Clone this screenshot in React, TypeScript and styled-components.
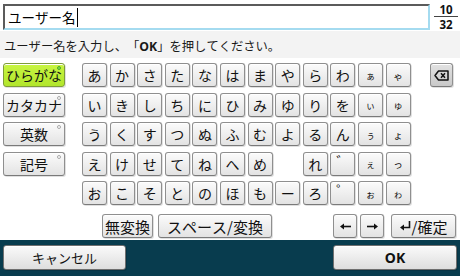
import React from "react";
import styled, { createGlobalStyle, css } from "styled-components";

const Global = createGlobalStyle`
  html, body { margin: 0; padding: 0; background: #fff; }
  body {
    font-family: "Noto Sans CJK JP", "Noto Sans", sans-serif;
    text-spacing-trim: space-all;
    font-kerning: none;
  }
  #root { width: 460px; height: 276px; overflow: hidden; }
`;

const Screen = styled.div`
  width: 460px;
  height: 276px;
  display: flex;
  flex-direction: column;
  background: #fff;
`;

const Header = styled.div`
  height: 31px;
  box-sizing: border-box;
  padding: 4px 0 0 3px;
  display: flex;
  align-items: flex-start;
  background: #fff;
`;

const InputBox = styled.div`
  width: 427px;
  height: 26px;
  box-sizing: border-box;
  border-top: 2px solid #5b5b5b;
  border-left: 2px solid #5b5b5b;
  border-right: 2px solid #a4dbf0;
  border-bottom: 2px solid #a4dbf0;
  background: #fff;
  display: flex;
  align-items: center;
  padding-left: 3px;
  font-size: 13.5px;
  color: #000;
`;

const Caret = styled.span`
  display: inline-block;
  width: 1px;
  height: 19px;
  background: #000;
  margin-left: 1px;
`;

const Counter = styled.div`
  margin-left: 4px;
  width: 24px;
  display: flex;
  flex-direction: column;
  align-items: center;
  font-family: "Noto Sans", "DejaVu Sans", sans-serif;
  font-weight: 700;
  font-size: 11.5px;
  line-height: 11px;
  color: #111;
`;

const CounterLine = styled.div`
  width: 24px;
  height: 1px;
  background: #444;
  margin: 1px 0 2px;
`;

const Instruction = styled.div`
  height: 27px;
  box-sizing: border-box;
  padding: 3px 0 0 4px;
  background: #f3f3f3;
  display: flex;
  align-items: center;
  font-size: 12.3px;
  color: #1a1a1a;
  white-space: nowrap;
`;

const Bold = styled.b`
  font-weight: 700;
  font-family: "Noto Sans", sans-serif;
`;

const Keyboard = styled.div`
  flex: 1;
  background: #fff;
  padding-top: 5px;
  display: flex;
  flex-direction: column;
`;

const TopSection = styled.div`
  display: flex;
  align-items: flex-start;
  padding-left: 3px;
`;

const ModeColumn = styled.div`
  width: 62px;
  display: flex;
  flex-direction: column;
  gap: 5.5px;
`;

const keyBase = css`
  box-sizing: border-box;
  border: 1px solid #8f8f8f;
  border-bottom-color: #7a7a7a;
  border-radius: 3px;
  background: linear-gradient(#fbfbfb, #e3e3e3);
  box-shadow: inset 0 1px 0 #fff, 1px 1px 0 rgba(0, 0, 0, 0.12);
  display: flex;
  align-items: center;
  justify-content: center;
  color: #111;
  line-height: 1;
  white-space: nowrap;
`;

const ModeButton = styled.div<{ $active?: boolean }>`
  ${keyBase};
  position: relative;
  height: 24px;
  font-size: 14px;
  ${(p) =>
    p.$active &&
    css`
      background: linear-gradient(#c8f542, #b2e62c);
      border-color: #7f9c3a;
    `}
`;

const Lamp = styled.span<{ $on?: boolean }>`
  position: absolute;
  top: 2px;
  right: 3px;
  width: 4px;
  height: 4px;
  border-radius: 50%;
  box-sizing: border-box;
  border: 1px solid ${(p) => (p.$on ? "#4fa82a" : "#a8a8a8")};
  background: ${(p) => (p.$on ? "#7be04a" : "#fff")};
`;

const KanaGrid = styled.div`
  margin-left: 17px;
  display: grid;
  grid-template-columns: repeat(12, 25px);
  grid-auto-rows: 24px;
  column-gap: 2.6px;
  row-gap: 5.5px;
`;

const Key = styled.div<{ $small?: boolean }>`
  ${keyBase};
  font-size: ${(p) => (p.$small ? "9.5px" : "14px")};
  padding-top: ${(p) => (p.$small ? "3px" : "0")};
`;

const MarkKey = styled.div`
  ${keyBase};
  font-size: 14px;
  align-items: flex-start;
  justify-content: flex-start;
  padding: 1px 0 0 5px;
`;

const EmptyCell = styled.div``;

const BackspaceKey = styled.div`
  ${keyBase};
  margin-left: 19.4px;
  width: 23px;
  height: 24px;
  background: linear-gradient(#e2e2e2, #c9c9c9);
`;

const FunctionRow = styled.div`
  margin-top: 9px;
  display: flex;
  align-items: flex-start;
  padding-left: 102px;
`;

const FnKey = styled.div<{ $w: number; $gap?: number }>`
  ${keyBase};
  width: ${(p) => p.$w}px;
  margin-left: ${(p) => p.$gap ?? 0}px;
  height: 24px;
  font-size: 15px;
  gap: 1px;
`;

const Footer = styled.div`
  height: 36px;
  box-sizing: border-box;
  background: #083c4e;
  padding: 5px 3px 0 3px;
  display: flex;
  justify-content: space-between;
  align-items: flex-start;
`;

const FooterButton = styled.div<{ $w: number; $bold?: boolean }>`
  ${keyBase};
  width: ${(p) => p.$w}px;
  height: 25px;
  border-color: #6f6f6f;
  background: linear-gradient(#fafafa, #dedede);
  font-size: ${(p) => (p.$bold ? "14px" : "13px")};
  font-weight: ${(p) => (p.$bold ? 700 : 400)};
  font-family: ${(p) =>
    p.$bold ? '"Noto Sans", sans-serif' : '"Noto Sans CJK JP", sans-serif'};
`;

const SMALL = new Set(["ぁ", "ぃ", "ぅ", "ぇ", "ぉ", "ゃ", "ゅ", "ょ", "っ", "ゎ"]);

const rows: string[][] = [
  ["あ", "か", "さ", "た", "な", "は", "ま", "や", "ら", "わ", "ぁ", "ゃ"],
  ["い", "き", "し", "ち", "に", "ひ", "み", "ゆ", "り", "を", "ぃ", "ゅ"],
  ["う", "く", "す", "つ", "ぬ", "ふ", "む", "よ", "る", "ん", "ぅ", "ょ"],
  ["え", "け", "せ", "て", "ね", "へ", "め", "", "れ", "゛", "ぇ", "っ"],
  ["お", "こ", "そ", "と", "の", "ほ", "も", "ー", "ろ", "゜", "ぉ", "ゎ"],
];

const BackspaceIcon = () => (
  <svg width="15" height="11" viewBox="0 0 15 11">
    <path d="M4.5 1 H14 V10 H4.5 L1 5.5 Z" fill="none" stroke="#111" strokeWidth="1.5" strokeLinejoin="round" />
    <path d="M7 3.2 L11 7.8 M11 3.2 L7 7.8" stroke="#111" strokeWidth="1.5" />
  </svg>
);

const ArrowIcon = ({ dir }: { dir: "left" | "right" }) => (
  <svg width="11" height="7" viewBox="0 0 11 7" style={dir === "right" ? { transform: "scaleX(-1)" } : undefined}>
    <path d="M0 3.5 L4 0.5 V6.5 Z" fill="#111" />
    <path d="M3 3.5 H11" stroke="#111" strokeWidth="1.6" />
  </svg>
);

const EnterIcon = () => (
  <svg width="11" height="10" viewBox="0 0 11 10">
    <path d="M9.5 0 V6.5 H3" fill="none" stroke="#111" strokeWidth="1.6" />
    <path d="M0 6.5 L4 3.5 V9.5 Z" fill="#111" />
  </svg>
);

export default function App() {
  return (
    <>
      <Global />
      <Screen>
        <Header>
          <InputBox>
            ユーザー名
            <Caret />
          </InputBox>
          <Counter>
            <span>10</span>
            <CounterLine />
            <span>32</span>
          </Counter>
        </Header>
        <Instruction>
          ユーザー名を入力し、「<Bold>OK</Bold>」を押してください。
        </Instruction>
        <Keyboard>
          <TopSection>
            <ModeColumn>
              <ModeButton $active>
                ひらがな
                <Lamp $on />
              </ModeButton>
              <ModeButton>
                カタカナ
                <Lamp />
              </ModeButton>
              <ModeButton>
                英数
                <Lamp />
              </ModeButton>
              <ModeButton>
                記号
                <Lamp />
              </ModeButton>
            </ModeColumn>
            <KanaGrid>
              {rows.flatMap((row, r) =>
                row.map((ch, c) => {
                  const k = `${r}-${c}`;
                  if (ch === "") return <EmptyCell key={k} />;
                  if (ch === "゛" || ch === "゜") return <MarkKey key={k}>{ch}</MarkKey>;
                  return (
                    <Key key={k} $small={SMALL.has(ch)}>
                      {ch}
                    </Key>
                  );
                })
              )}
            </KanaGrid>
            <BackspaceKey>
              <BackspaceIcon />
            </BackspaceKey>
          </TopSection>
          <FunctionRow>
            <FnKey $w={51}>無変換</FnKey>
            <FnKey $w={114} $gap={5}>
              スペース/変換
            </FnKey>
            <FnKey $w={24} $gap={61}>
              <ArrowIcon dir="left" />
            </FnKey>
            <FnKey $w={24} $gap={3}>
              <ArrowIcon dir="right" />
            </FnKey>
            <FnKey $w={65} $gap={7}>
              <EnterIcon />
              /確定
            </FnKey>
          </FunctionRow>
        </Keyboard>
        <Footer>
          <FooterButton $w={123}>キャンセル</FooterButton>
          <FooterButton $w={124} $bold>
            OK
          </FooterButton>
        </Footer>
      </Screen>
    </>
  );
}
